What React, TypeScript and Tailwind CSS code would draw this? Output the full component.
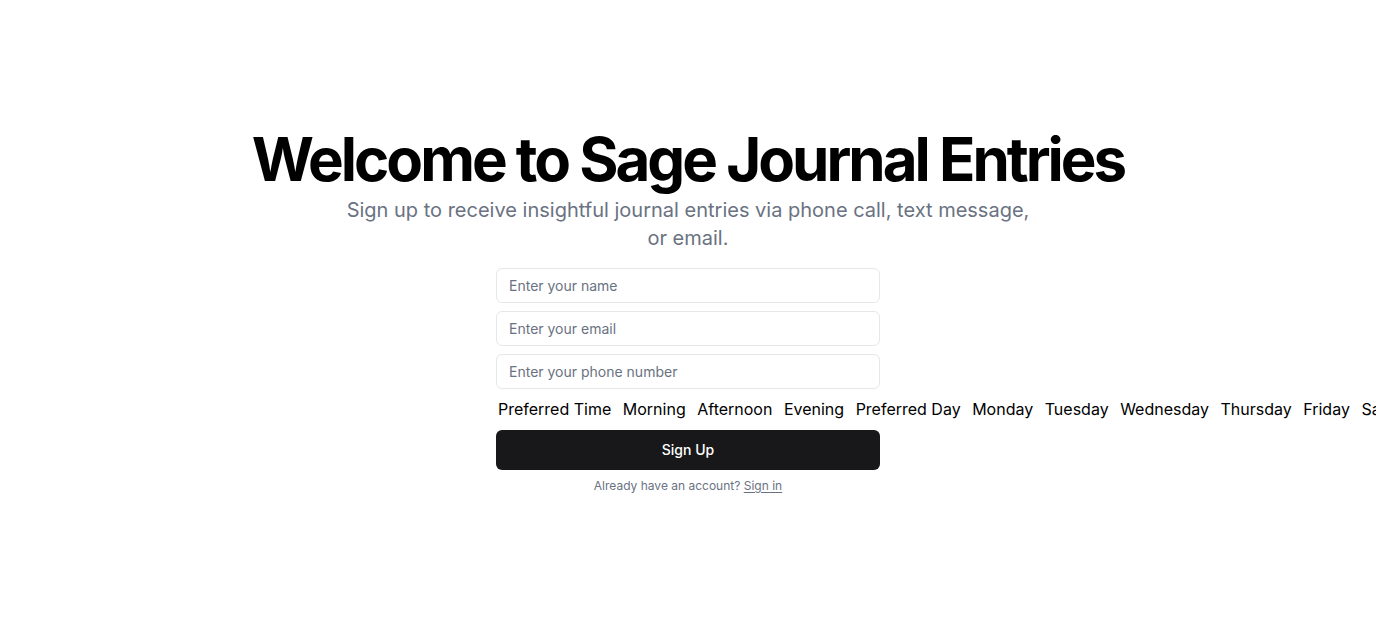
import React from "react";

export default function App() {
  const items = [
    "Preferred Time",
    "Morning",
    "Afternoon",
    "Evening",
    "Preferred Day",
    "Monday",
    "Tuesday",
    "Wednesday",
    "Thursday",
    "Friday",
    "Saturday",
    "Sunday",
  ];
  return (
    <div
      className="flex min-h-screen w-full flex-col items-center justify-center overflow-hidden bg-white pb-[6px] text-black"
      style={{ fontFamily: "Inter, 'Noto Sans', sans-serif" }}
    >
      <div className="flex flex-col items-center text-center">
        <h1 className="mb-px text-6xl font-bold leading-[1.2] tracking-[-0.05em] text-black">
          Welcome to Sage Journal Entries
        </h1>
        <p className="max-w-[700px] text-xl leading-7 text-gray-500">
          Sign up to receive insightful journal entries via phone call, text message, or email.
        </p>
      </div>
      <div className="mt-4 w-full max-w-sm">
        <form className="flex flex-col gap-2">
          <input
            className="h-[35px] w-full rounded-md border border-gray-200 bg-white px-3 text-sm text-black placeholder:text-gray-500 outline-none"
            placeholder="Enter your name"
          />
          <input
            className="h-[35px] w-full rounded-md border border-gray-200 bg-white px-3 text-sm text-black placeholder:text-gray-500 outline-none"
            placeholder="Enter your email"
          />
          <input
            className="h-[35px] w-full rounded-md border border-gray-200 bg-white px-3 text-sm text-black placeholder:text-gray-500 outline-none"
            placeholder="Enter your phone number"
          />
          <div className="flex gap-[11.5px] whitespace-nowrap pl-0.5 text-base leading-6 text-black">
            {items.map((t) => (
              <span key={t}>{t}</span>
            ))}
          </div>
          <button
            type="button"
            className="mt-px h-10 w-full rounded-md bg-[#18181b] text-sm font-medium text-white"
          >
            Sign Up
          </button>
        </form>
        <p className="mt-2 text-center text-xs text-gray-500">
          Already have an account?{" "}
          <a href="#" className="underline underline-offset-2">
            Sign in
          </a>
        </p>
      </div>
    </div>
  );
}
